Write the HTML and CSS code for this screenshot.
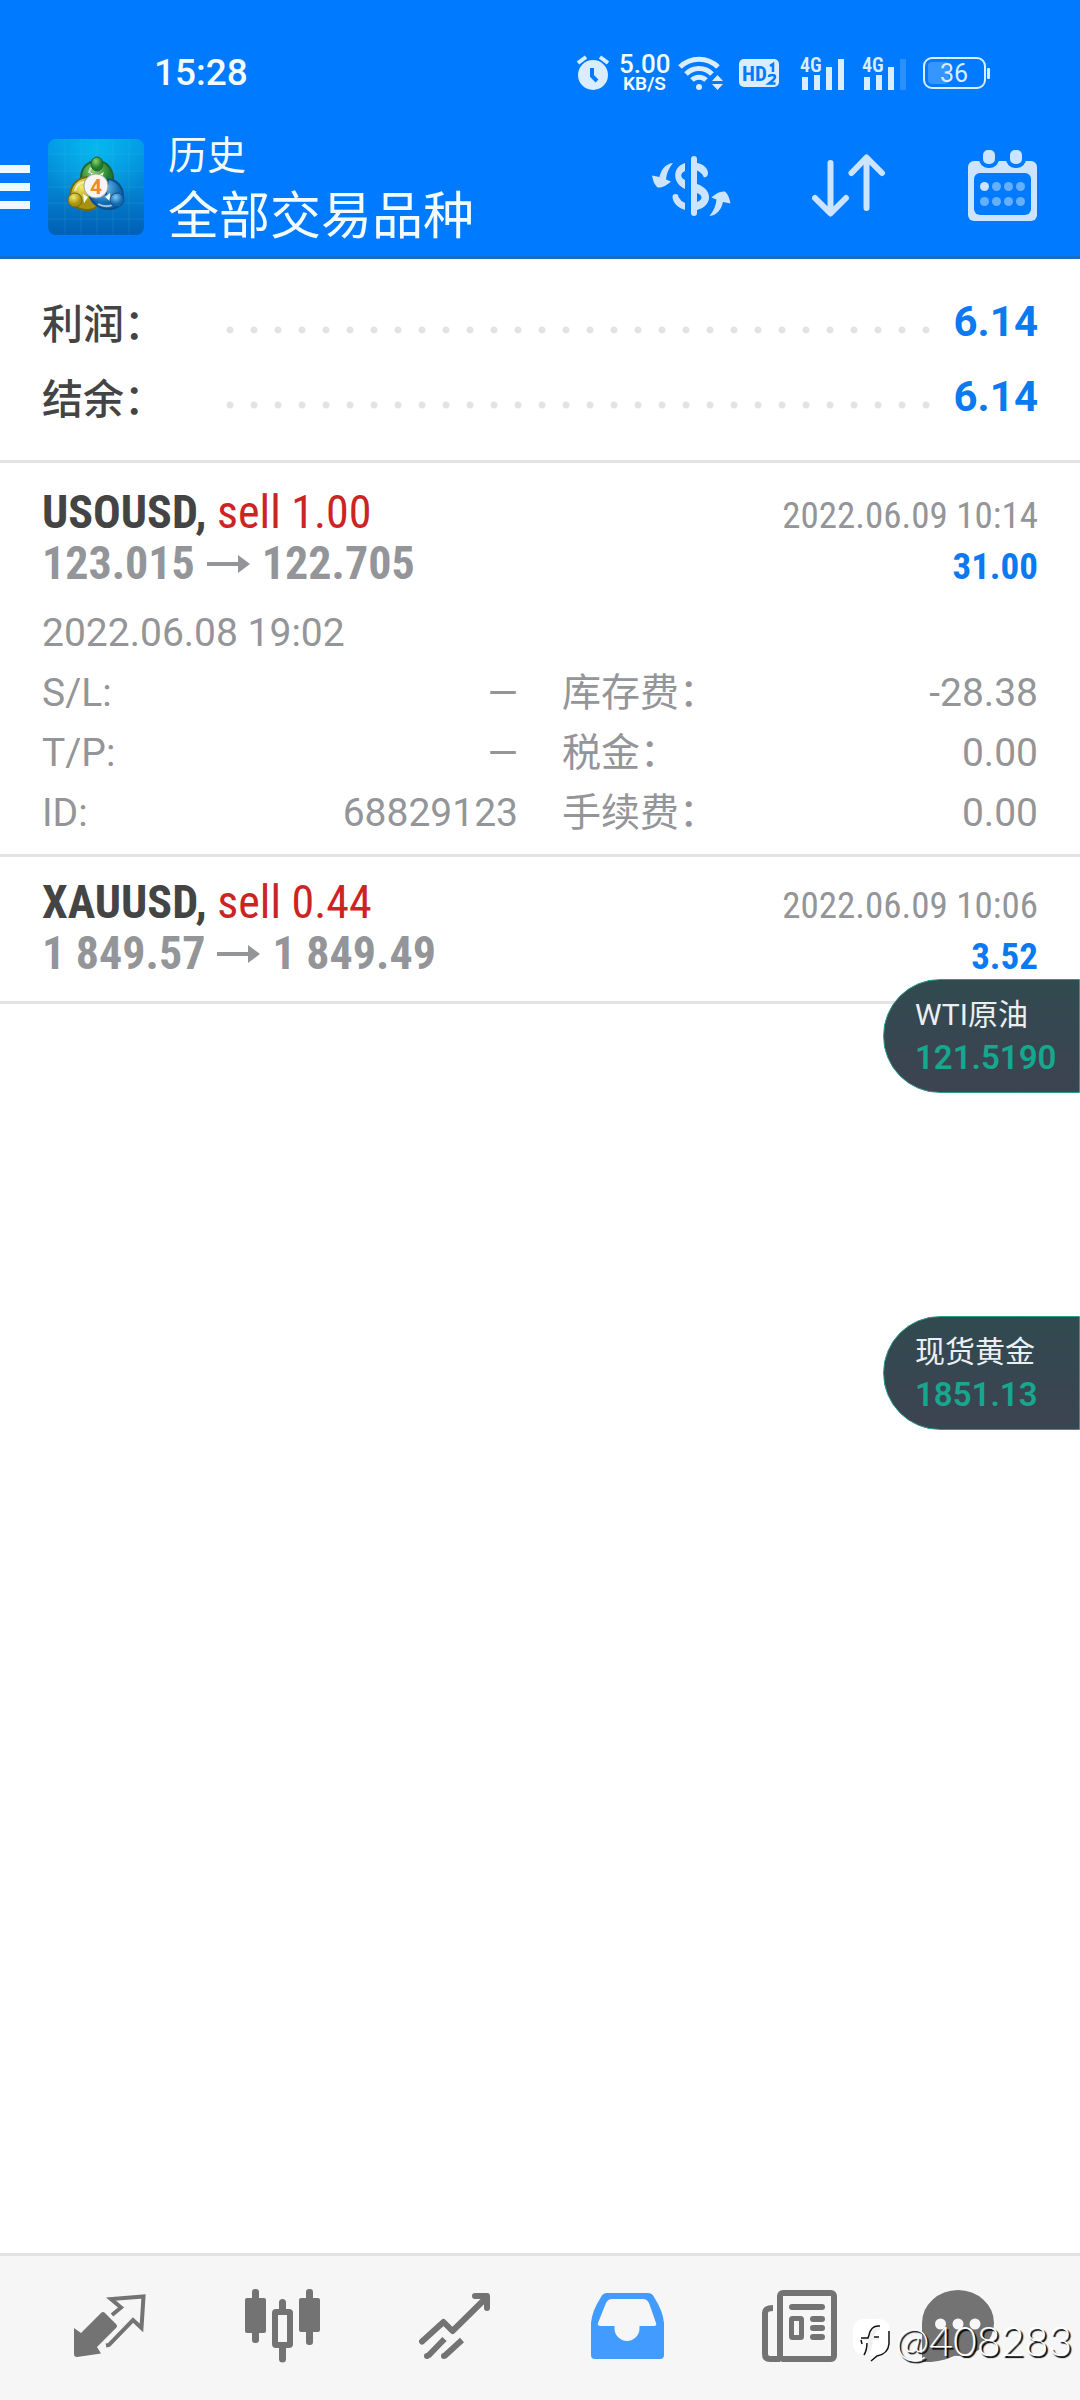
FILE: index.html
```html
<!DOCTYPE html>
<html lang="zh-CN">
<head>
<meta charset="utf-8">
<meta name="viewport" content="width=device-width">
<title>历史</title>
<link rel="stylesheet" href="styles.css">
</head>
<body>
<div class="screen">
  <header class="header">
    <div class="status">
      <span class="status-time">15:28</span>
      <div class="status-right">
        <div class="status-net">
          <svg width="34" height="36" viewBox="0 0 34 36" class="glyph"><circle cx="17" cy="20" r="15"/><path class="line" stroke-width="4" d="M2 8L10 2M24 2L32 8"/><path class="cut" stroke-width="4" d="M16 13v8l5 5"/></svg>
          <span class="speed"><b class="speed-num">5.00</b><b class="speed-unit">KB/S</b></span>
          <svg width="44" height="36" viewBox="0 0 44 36" class="glyph"><path class="line" stroke-width="5" d="M1 12A27 27 0 0 1 39 12M7 19A18 18 0 0 1 33 19M13 25A10 10 0 0 1 27 25"/><circle cx="20" cy="32" r="3"/><path d="M38.500 20l5.500 6h-11zM33 29h11l-5.500 6z"/></svg>
        </div>
        <svg width="44" height="28" viewBox="0 0 44 28" class="glyph"><rect width="40" height="28" rx="5"/><text class="cut-text" x="3" y="22" font-size="21">HD</text><path class="cut" stroke-width="2.500" d="M31 7l3-2v8M30 18q0-2 3-2t3 2q0 2-6 6.500h6.500"/></svg>
        <svg width="46" height="36" viewBox="0 0 46 36" class="glyph"><text class="net-text" x="1" y="17" font-size="20">4G</text><path d="M3 22h6v13H3zM15 20h6v15h-6zM27 12h6v23h-6zM39 4h6v31h-6z"/></svg>
        <svg width="46" height="36" viewBox="0 0 46 36" class="glyph"><text class="net-text" x="1" y="17" font-size="20">4G</text><path d="M3 22h6v13H3zM15 20h6v15h-6zM27 12h6v23h-6z"/><path opacity=".2" d="M39 4h6v31h-6z"/></svg>
        <svg width="67" height="32" viewBox="0 0 67 32" class="glyph"><rect class="line" stroke-width="2" x="1" y="1" width="61" height="30" rx="8"/><rect x="5" y="5" width="21" height="22" rx="4" opacity=".25"/><rect x="64" y="11" width="3" height="11" rx="1"/><text class="battery-text" x="31" y="25" font-size="25" text-anchor="middle">36</text></svg>
      </div>
    </div>
    <div class="appbar">
      <button class="icon-button menu" aria-label="菜单"><i></i><i></i><i></i></button>
      <svg class="logo" width="96" height="96" viewBox="0 0 96 96">
        <defs>
          <linearGradient id="bg" x2="0" y2="1"><stop offset="0" stop-color="#0298e6"/><stop offset=".5" stop-color="#0484d2"/><stop offset="1" stop-color="#0060b4"/></linearGradient>
          <radialGradient id="glow" cx=".5" cy=".1" r=".6"><stop offset="0" stop-color="#08c0f0" stop-opacity=".8"/><stop offset="1" stop-color="#08c0f0" stop-opacity="0"/></radialGradient>
          <radialGradient id="g" cx=".4" cy=".3"><stop offset="0" stop-color="#8fd070"/><stop offset="1" stop-color="#1d7d2b"/></radialGradient>
          <radialGradient id="y" cx=".4" cy=".3"><stop offset="0" stop-color="#f4ea6c"/><stop offset="1" stop-color="#a8920d"/></radialGradient>
          <radialGradient id="b" cx=".4" cy=".3"><stop offset="0" stop-color="#7cc8f2"/><stop offset="1" stop-color="#0f69b0"/></radialGradient>
        </defs>
        <rect width="96" height="96" rx="8" fill="url(#bg)"/><rect width="96" height="96" rx="8" fill="url(#glow)"/>
        <path d="M17 0v96M33 0v96M49 0v96M65 0v96M81 0v96M0 15h96M0 32h96M0 48h96M0 64h96M0 80h96" stroke="#5cc8f4" stroke-opacity=".15"/>
        <path d="M49 22c11 0 17 10 16 20-1 8-5 11-9 12H42c-6-3-10-9-9-17 1-9 7-15 16-15z" fill="url(#g)" stroke="#1f6330" stroke-width="2"/>
        <path d="M41 38c-12 0-19 9-19 19 0 9 8 14 17 14 5 0 9-2 11-4L41 54z" fill="url(#y)" stroke="#6f6a18" stroke-width="2"/>
        <path d="M60 40c9 1 15 8 15 17 0 9-7 13-14 13-9 0-16-5-19-12l16-3z" fill="url(#b)" stroke="#0d4f8b" stroke-width="2"/>
        <path d="M41 34c1-5 4-8 8-8M27 52c1-5 4-8 9-9M50 65c5 3 12 3 16 0" fill="none" stroke="#fff" stroke-opacity=".6" stroke-width="2"/>
        <path d="M42 33l7 4 7-4-3 7h-8zM35 55l1 9 4-6zM62 54l1 9-6-5z" fill="#f4fbf4"/>
        <ellipse cx="49" cy="25" rx="6" ry="7" fill="url(#g)" stroke="#1f6330"/>
        <circle cx="27" cy="61" r="7" fill="url(#y)" stroke="#6f6a18"/>
        <circle cx="69" cy="61" r="7" fill="url(#b)" stroke="#0d4f8b"/>
        <circle cx="48" cy="47" r="12" fill="#f5f5f5" stroke="#a4aca8"/>
        <text x="48" y="55" class="logo-text" text-anchor="middle" font-size="21">4</text>
      </svg>
      <h1 class="titles"><span class="title-small">历史</span><span class="title-large">全部交易品种</span></h1>
      <div class="actions">
        <button class="icon-button" aria-label="货币"><svg width="79" height="60" viewBox="0 0 79 60" class="tool"><path class="line" stroke-width="6" stroke-linecap="round" d="M42 3V57"/><path d="M33 7C20 11 20 27 33 33V24C28 22 28 17 33 15ZM20.500 41q0-3 3-3q3 0 3 3q2 4 6.500 6v7C26 52 21 47 20.500 41ZM45 7C52 8 56 13 56 17q0 4-4 4.500q-2-5-7-7ZM45 28C61 33 61 50 45 54V46C51 44 51 39 45 37Z"/><path id="swing" d="M21 7C13 8 9 14 7.500 21L0 19.500C1 25 2.500 29 5.500 31.500C11 32 15 29 19 25.500L14 23.500C14.500 17 17 12 21 7Z"/><use href="#swing" transform="rotate(180 39.250 33.500)"/></svg></button>
        <button class="icon-button" aria-label="排序"><svg width="75" height="63" viewBox="0 0 75 63" class="tool"><path class="line" stroke-width="6" stroke-linecap="round" stroke-linejoin="round" d="M18.500 9V59M3 44L18.500 59.500L34 44M54.500 54V4M39.500 19L54.500 3.500L70 19"/></svg></button>
        <button class="icon-button" aria-label="日期"><svg width="70" height="71" viewBox="0 0 70 71" class="tool"><rect y="11" width="69" height="60" rx="6"/><rect class="hole" x="6" y="23" width="57" height="42" rx="6"/><rect class="ring" x="13" y="-2" width="16" height="18" rx="7"/><rect class="ring" x="40" y="-2" width="16" height="18" rx="7"/><circle cx="16.500" cy="36.500" r="4.500"/><g opacity=".5"><circle cx="28.500" cy="36.500" r="4.500"/><circle cx="40.500" cy="36.500" r="4.500"/><circle cx="52.500" cy="36.500" r="4.500"/><circle cx="16.500" cy="51.500" r="4.500"/><circle cx="28.500" cy="51.500" r="4.500"/><circle cx="40.500" cy="51.500" r="4.500"/><circle cx="52.500" cy="51.500" r="4.500"/></g></svg></button>
      </div>
    </div>
  </header>

  <main class="content">
    <dl class="summary">
      <div class="summary-row"><dt>利润：</dt><dd>6.14</dd></div>
      <div class="summary-row"><dt>结余：</dt><dd>6.14</dd></div>
    </dl>

    <article class="trade trade-open">
      <div class="trade-line"><h2>USOUSD, <span class="side">sell 1.00</span></h2><time class="closed">2022.06.09 10:14</time></div>
      <div class="trade-line"><span class="prices">123.015<svg class="arrow" width="43" height="18" viewBox="0 0 43 18"><path d="M0 7h31V0l12 9-12 9v-7H0z"/></svg>122.705</span><strong class="profit">31.00</strong></div>
      <time class="opened">2022.06.08 19:02</time>
      <dl class="details">
        <div><dt>S/L:</dt><dd>—</dd></div>
        <div><dt>库存费：</dt><dd>-28.38</dd></div>
        <div><dt>T/P:</dt><dd>—</dd></div>
        <div><dt>税金：</dt><dd>0.00</dd></div>
        <div><dt>ID:</dt><dd>68829123</dd></div>
        <div><dt>手续费：</dt><dd>0.00</dd></div>
      </dl>
    </article>

    <article class="trade">
      <div class="trade-line"><h2>XAUUSD, <span class="side">sell 0.44</span></h2><time class="closed">2022.06.09 10:06</time></div>
      <div class="trade-line"><span class="prices">1 849.57<svg class="arrow" width="43" height="18" viewBox="0 0 43 18"><path d="M0 7h31V0l12 9-12 9v-7H0z"/></svg>1 849.49</span><strong class="profit">3.52</strong></div>
    </article>
  </main>

  <nav class="tabs">
    <button class="icon-button" aria-label="行情"><svg width="72" height="64" viewBox="0 0 72 64" class="tab"><path d="M0 34L7 39L27 19q2-2 4 0L42 30q2 2 0 4L23 53L27 59.500L3 63q-3 0-3-3z"/><path class="line" stroke-width="4" d="M38 21L47 13.500L37 5L69.500 2.500L67.500 34L59 26L35 51L32 51.500"/></svg></button>
    <button class="icon-button" aria-label="图表"><svg width="75" height="74" viewBox="0 0 75 74" class="tab"><rect y="9" width="21" height="35" rx="2"/><rect x="7" width="7" height="54" rx="3"/><rect class="line" stroke-width="6" x="30" y="23" width="15" height="33" rx="1"/><path class="line" stroke-width="7" stroke-linecap="round" d="M37.500 13.500V20M37.500 59v11"/><rect x="54" y="9" width="21" height="34" rx="2"/><rect x="61" width="7" height="56" rx="3"/></svg></button>
    <button class="icon-button" aria-label="交易"><svg width="72" height="66" viewBox="0 0 72 66" class="tab"><path class="line" stroke-width="6" stroke-linecap="round" stroke-linejoin="round" d="M3 48.500L24.500 29L33.500 38L68 4M56 3H68V15"/><path class="line" stroke-width="6" d="M25.500 46L9 63M43 47L25.500 63"/><circle cx="8" cy="63" r="3"/><circle cx="25" cy="63" r="3"/></svg></button>
    <button class="icon-button" aria-label="历史" aria-current="page"><svg width="73" height="66" viewBox="0 0 73 66" class="tab tab-active"><path fill-rule="evenodd" d="M16 0H57Q61 0 63 4Q72 18 73 30V62Q73 66 69 66H4Q0 66 0 62V30Q1 18 10 4Q12 0 16 0ZM21 6Q17 6 15 10L7 30Q6 33 10 33H23.500V35.500A12.500 12.500 0 0 0 48.500 35.500V33H63Q66 33 65 30L58 10Q56 6 52 6Z"/></svg></button>
    <button class="icon-button" aria-label="新闻"><svg width="76" height="72" viewBox="0 0 76 72" class="tab"><rect class="line" stroke-width="6" x="18" y="3" width="54" height="66" rx="3"/><path class="line" stroke-width="6" d="M11 18Q3 18 3 23V64Q3 69 8 69H18"/><path class="line" stroke-width="6" stroke-linecap="round" d="M30 17H60M51 29H60M51 38H60M51 47H60"/><rect class="line" stroke-width="5" x="29.500" y="28.500" width="10" height="19" rx="1"/></svg></button>
    <button class="icon-button" aria-label="信息"><svg width="72" height="72" viewBox="0 0 72 72" class="tab"><ellipse cx="36" cy="33" rx="36" ry="33"/><path d="M0 33V72C14 73 26 69 34 65Z"/><g fill="#f6f6f6"><circle cx="18.500" cy="34" r="5.500"/><circle cx="36" cy="34" r="5.500"/><circle cx="53" cy="34" r="5.500"/></g></svg></button>
  </nav>

  <aside class="quote quote-oil"><span class="quote-name">WTI原油</span><b class="quote-price">121.5190</b></aside>
  <aside class="quote quote-gold"><span class="quote-name">现货黄金</span><b class="quote-price">1851.13</b></aside>
  <div class="credit"><svg width="38" height="44" viewBox="0 0 38 44"><path fill="#fff" d="M12 0H25Q37 0 37 12V24Q37 36 25 36L18 42L19 36H12Q0 36 0 24V12Q0 0 12 0Z"/><path fill="#f0f0f0" d="M16 19q1-10 11-12v4q-5 0-6 8h5v2h-6q-1 12-7 16 3-8 2-16H8v-2z"/><path fill="none" stroke="#111" stroke-width="1.500" d="M27 7Q18 6 16 16L15 19H8M21 18H26M8 21L9 25M14 24Q14 31 11 36M36 12V25Q35 35 24 37L18 42"/></svg><span>@408283</span></div>
</div>
</body>
</html>
```
FILE: styles.css
```css
* { box-sizing: border-box; }

body {
  margin: 0;
  background: #fff;
  font-family: Roboto, "Noto Sans CJK SC", sans-serif;
  font-size: 39px;
  color: #949599;
}

h1, h2, dl, dd { margin: 0; font-weight: 400; }
svg { display: block; flex: none; }

.screen {
  position: relative;
  display: flex;
  flex-direction: column;
  min-height: 100vh;
  overflow: hidden;
}

.icon-button {
  display: flex;
  justify-content: center;
  padding: 0;
  border: 0;
  background: none;
}

.line { fill: none; stroke: currentColor; }

/* Header */
.header {
  background: #007aff;
  border-bottom: 3px solid #1a6bcb;
  color: #f2fcff;
}

.status {
  display: flex;
  align-items: center;
  justify-content: space-between;
  height: 108px;
  padding: 38px 90px 0 154px;
}
.status-time { font-size: 37px; line-height: 40px; font-weight: 500; }
.status-right { display: flex; align-items: center; gap: 16px; }
.status-net { display: flex; align-items: center; gap: 9px; }
.speed { display: flex; flex-direction: column; width: 51px; text-align: center; }
.speed-num { font-size: 26px; line-height: 22px; font-weight: 500; }
.speed-unit { font-size: 19px; line-height: 18px; font-weight: 600; }
.glyph { color: #d9edff; fill: currentColor; overflow: visible; }
.cut { fill: none; stroke: #007aff; }
.cut-text { fill: #007aff; font-family: "Roboto Condensed", Roboto, sans-serif; font-weight: 700; }
.net-text { font-family: "Roboto Condensed", Roboto, sans-serif; font-weight: 600; }
.battery-text { font-weight: 400; }

.appbar {
  display: flex;
  align-items: center;
  height: 148px;
  padding: 10px 42px 0 0;
}
.menu { flex-direction: column; gap: 10px; width: 30px; margin-right: 18px; }
.menu i { height: 8px; width: 30px; background: #eef9ff; }
.logo-text { fill: #f08a24; font-weight: 700; }
.titles { display: flex; flex-direction: column; flex: 1; margin-left: 24px; }
.title-small { font-size: 39px; line-height: 60px; }
.title-large { font-size: 51px; line-height: 62px; }
.actions { display: flex; align-items: center; gap: 81px; padding-bottom: 3px; }
.tool { color: #cce4ff; fill: currentColor; }
.hole { fill: #007aff; }
.ring { stroke: #007aff; stroke-width: 4px; }

/* Totals */
.content { flex: 1; }
.summary {
  padding: 25px 42px 26px;
  border-bottom: 3px solid #e3e3e3;
  font-size: 42px;
}
.summary-row { display: flex; align-items: center; height: 75px; }
.summary-row::before {
  content: "";
  order: 1;
  flex: 1;
  height: 24px;
  margin-right: 24px;
  background: radial-gradient(circle at 4px 4px, #e3e3e3 3px, transparent 4px) left bottom / 24px 8px repeat-x;
}
.summary dt { width: 184px; padding-bottom: 2px; font-size: 41px; font-weight: 500; color: #444; }
.summary dd { order: 2; font-weight: 700; color: #0b79f0; }

/* Trades */
.trade {
  padding: 20px 42px 22px;
  border-bottom: 3px solid #e3e3e3;
}
.trade-open { padding: 24px 42px 11px; }
.trade-line {
  display: flex;
  align-items: baseline;
  justify-content: space-between;
  height: 51px;
  font-family: "Roboto Condensed", Roboto, sans-serif;
  font-size: 37px;
  line-height: 51px;
}
.trade h2 { font-size: 46px; font-weight: 700; color: #444; }
.side { font-weight: 400; color: #cc2424; }
.prices { font-size: 46px; font-weight: 700; }
.arrow { display: inline-block; margin: 0 12px; vertical-align: 6px; fill: currentColor; }
.closed, .profit { line-height: 40px; }
.profit { font-weight: 700; color: #0b79f0; }
.opened { display: block; margin-top: 14px; line-height: 60px; }
.details {
  display: grid;
  grid-template-columns: 1fr 1fr;
  column-gap: 44px;
  line-height: 60px;
}
.details div { display: flex; justify-content: space-between; height: 60px; }

/* Bottom tabs */
.tabs {
  display: grid;
  grid-template-columns: repeat(5, 6fr) 5fr;
  align-items: center;
  height: 147px;
  padding: 0 50px 5px 24px;
  border-top: 3px solid #e3e3e3;
  background: #f6f6f6;
}
.tab { color: #737373; fill: currentColor; }
.tab-active { color: #429cff; }
.glyph .line, .tool .line, .tab .line { fill: none; }

/* Floating quotes */
.quote {
  position: absolute;
  right: 0;
  display: flex;
  flex-direction: column;
  width: 197px;
  height: 114px;
  padding: 15px 0 0 31px;
  border: 1px solid #2c9c86;
  border-radius: 57px 0 0 57px;
  background: linear-gradient(#314a50, #3d4351);
  color: #eceff0;
}
.quote-oil { top: 979px; }
.quote-gold { top: 1316px; }
.quote-name { font-size: 30px; line-height: 40px; }
.quote-price { font-size: 33px; line-height: 46px; font-weight: 600; color: #17a78f; }

.credit {
  position: absolute;
  right: 8px;
  bottom: 35px;
  display: flex;
  align-items: center;
  gap: 4px;
  font-family: Lato, sans-serif;
  font-size: 41px;
  line-height: 48px;
  font-weight: 300;
  color: #fff;
  text-shadow: 2px 2px 1px #000;
}
```
